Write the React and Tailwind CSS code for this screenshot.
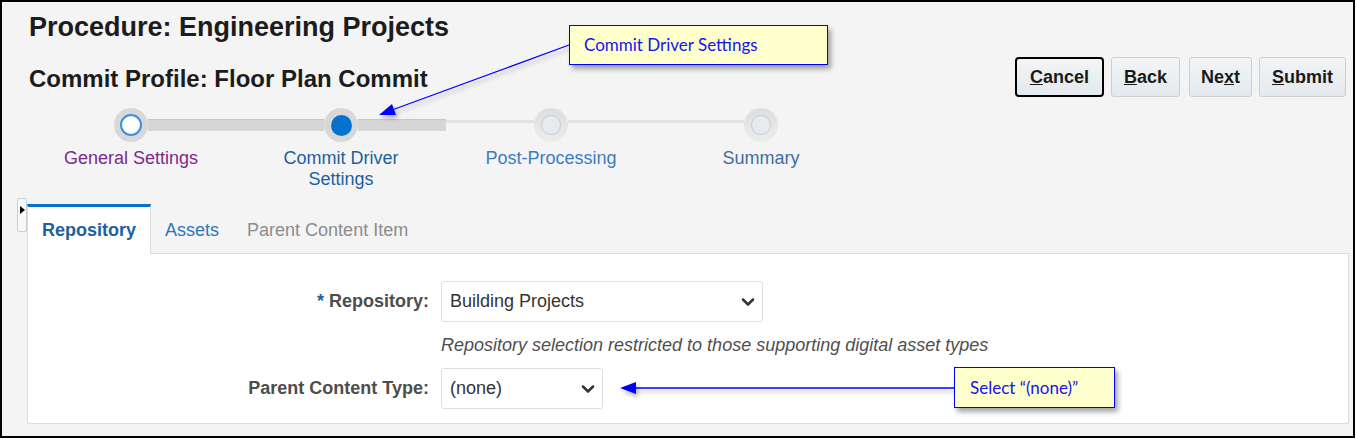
import { ChevronDown } from 'lucide-react';

const steps = [
    { label: ['General Settings'], color: 'text-[#7b2b8c]', kind: 'done', left: 'none', right: 'thick' },
    { label: ['Commit Driver', 'Settings'], color: 'text-[#1d5f9f]', kind: 'current', left: 'thick', right: 'thick' },
    { label: ['Post-Processing'], color: 'text-[#3a7dc2]', kind: 'todo', left: 'thin', right: 'thin' },
    { label: ['Summary'], color: 'text-[#3c6f9f]', kind: 'todo', left: 'thin', right: 'none' },
];

const Track = ({ type }) => {
    if (type === 'thick') {
        return <div className="flex-1 h-[12px] bg-[#d6d6d6] border-t border-[#c7c7c7]" />;
    }
    if (type === 'thin') {
        return <div className="flex-1 self-start mt-[12px] h-[3px] bg-[#e1e1e1]" />;
    }
    return <div className="flex-1" />;
};

const StepDot = ({ kind }) => {
    if (kind === 'done') {
        return (
            <div className="w-[34px] h-[34px] rounded-full bg-[#d8d8d8] flex items-center justify-center">
                <div className="w-[22px] h-[22px] rounded-full bg-white border-2 border-[#3b8fe0]" />
            </div>
        );
    }
    if (kind === 'current') {
        return (
            <div className="w-[34px] h-[34px] rounded-full bg-[#d8d8d8] flex items-center justify-center">
                <div className="w-[21px] h-[21px] rounded-full bg-[#0572ce]" />
            </div>
        );
    }
    return (
        <div className="w-[34px] h-[34px] rounded-full bg-gradient-to-b from-[#dedede] to-[#ececec] flex items-center justify-center">
            <div className="w-[20px] h-[20px] rounded-full bg-[#e8ebee] border border-[#c5ccd3]" />
        </div>
    );
};

const Btn = ({ children, focused, pad }) => (
    <button
        className={
            focused
                ? `h-[40px] ${pad} rounded-[4px] border-2 border-black bg-gradient-to-b from-[#f3f5f7] to-[#e4e9ed] text-[18px] font-bold text-[#1a1a1a]`
                : `h-[40px] ${pad} rounded-[3px] border border-[#c9d1d8] bg-gradient-to-b from-[#f3f5f7] to-[#e4e9ed] text-[18px] font-bold text-[#1a1a1a]`
        }
    >
        {children}
    </button>
);

const Select = ({ value, width }) => (
    <div className={`${width} h-[41px] flex items-center justify-between pl-[8px] pr-[4px] bg-white border border-[#dadfe3] rounded-[3px] text-[18px] text-[#333333]`}>
        <span>{value}</span>
        <ChevronDown size={20} strokeWidth={3} className="text-[#333333]" />
    </div>
);

const App = () => {
    return (
        <div className="relative w-[1355px] h-[438px] border-2 border-black bg-[#f4f4f4] font-['Liberation_Sans',Arial,sans-serif] overflow-hidden">
            <div className="flex justify-between pl-[24px] pr-[7px]">
                <div>
                    <h1 className="ml-[3px] mt-[10px] text-[27px] leading-[30px] font-bold text-[#1c1c1c]">
                        Procedure: Engineering Projects
                    </h1>
                    <h2 className="ml-[3px] mt-[23px] text-[24px] leading-[28px] font-bold text-[#1c1c1c]">
                        Commit Profile: Floor Plan Commit
                    </h2>
                    <div className="mt-[15px] flex">
                        {steps.map((s, i) => (
                            <div key={i} className="w-[210px] flex flex-col items-center">
                                <div className="w-full h-[34px] flex items-center">
                                    <Track type={s.left} />
                                    <StepDot kind={s.kind} />
                                    <Track type={s.right} />
                                </div>
                                <div className={`mt-[6px] text-[18px] leading-[21px] text-center ${s.color}`}>
                                    {s.label.map((l) => (
                                        <div key={l}>{l}</div>
                                    ))}
                                </div>
                            </div>
                        ))}
                    </div>
                </div>

                <div className="mt-[55px] flex items-start">
                    <Btn focused pad="px-[13px]"><span className="underline">C</span>ancel</Btn>
                    <div className="w-[7px]" />
                    <Btn pad="px-[12px]"><span className="underline">B</span>ack</Btn>
                    <div className="w-[9px]" />
                    <Btn pad="px-[11px]">Ne<span className="underline">x</span>t</Btn>
                    <div className="w-[7px]" />
                    <Btn pad="px-[12px]"><span className="underline">S</span>ubmit</Btn>
                </div>
            </div>

            <div className="mt-[8px] flex items-start pl-[15px] pr-[4px]">
                <div className="w-[10px] h-[34px] bg-[#f7f8f9] border border-[#c9ced3] rounded-[2px] flex items-center justify-center">
                    <div className="w-0 h-0 border-y-[4px] border-y-transparent border-l-[5px] border-l-black -mt-[10px]" />
                </div>
                <div className="flex-1 mt-[6px]">
                    <div className="flex items-end h-[50px]">
                        <div className="h-[50px] px-[14px] flex items-center bg-white border-t-[3px] border-t-[#0572ce] border-x border-x-[#d6dde3] text-[18px] font-bold text-[#1d5f9f]">
                            Repository
                        </div>
                        <div className="h-[47px] px-[14px] flex items-center border-b border-[#d6dde3] text-[18px] text-[#2f76b9]">
                            Assets
                        </div>
                        <div className="h-[47px] px-[14px] flex items-center border-b border-[#d6dde3] text-[18px] text-[#8c8c8c]">
                            Parent Content Item
                        </div>
                        <div className="flex-1 border-b border-[#d6dde3]" />
                    </div>
                    <div className="bg-white border border-t-0 border-[#d6dde3] rounded-b-[3px] pt-[27px] pb-[14px]">
                        <div className="grid grid-cols-[401px_auto] gap-x-[12px] items-center">
                            <div className="text-right text-[18px] font-bold text-[#4d4d4d]">
                                <span className="text-[#1d5f9f]">*</span> Repository:
                            </div>
                            <Select value="Building Projects" width="w-[322px]" />
                            <div />
                            <div className="py-[12px] text-[18px] leading-[22px] italic text-[#4f4f4f]">
                                Repository selection restricted to those supporting digital asset types
                            </div>
                            <div className="text-right text-[18px] font-bold text-[#4d4d4d]">
                                Parent Content Type:
                            </div>
                            <Select value="(none)" width="w-[162px]" />
                        </div>
                    </div>
                </div>
            </div>

            <svg
                className="absolute left-[-2px] top-[-2px] pointer-events-none drop-shadow-[2px_3px_2px_rgba(0,0,0,0.3)]"
                width="1356"
                height="439"
            >
                <line x1="569" y1="45" x2="392" y2="110" stroke="#0000ff" strokeWidth="1.3" />
                <polygon points="379,115 396,115 392,104" fill="#0000ff" />
                <line x1="954" y1="388" x2="634" y2="388" stroke="#0000ff" strokeWidth="1.3" />
                <polygon points="620,388 636,382 636,394" fill="#0000ff" />
            </svg>

            <div className="absolute left-[567px] top-[23px] w-[259px] h-[40px] flex items-center pl-[14px] bg-[#ffffcc] border border-[#0000ff] shadow-[3px_4px_5px_rgba(0,0,0,0.35)] font-['Lato',sans-serif] text-[17px] text-[#1414ee]">
                Commit Driver Settings
            </div>
            <div className="absolute left-[952px] top-[365px] w-[161px] h-[41px] flex items-center pl-[15px] bg-[#ffffcc] border border-[#0000ff] shadow-[3px_4px_5px_rgba(0,0,0,0.35)] font-['Lato',sans-serif] text-[17px] text-[#1414ee]">
                Select “(none)”
            </div>
        </div>
    );
};

export default App;
